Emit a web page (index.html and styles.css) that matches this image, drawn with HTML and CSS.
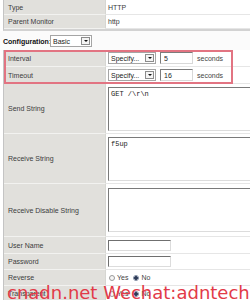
FILE: index.html
```html
<!DOCTYPE html>
<html>
<head>
<meta charset="utf-8">
<title>Monitor</title>
<link rel="stylesheet" href="styles.css">
</head>
<body>
<div class="page">
  <div class="tbl top">
    <div class="row h15"><div class="lbl">Type</div><div class="val">HTTP</div></div>
    <div class="row h14"><div class="lbl">Parent Monitor</div><div class="val">http</div></div>
  </div>

  <div class="config">
    <span class="cfg-label">Configuration:</span>
    <span class="sel sel-basic"><span class="sel-text">Basic</span><span class="sel-btn"></span></span>
  </div>

  <div class="tbl main">
    <div class="row h17">
      <div class="lbl">Interval</div>
      <div class="val">
        <span class="sel sel-spec"><span class="sel-text">Specify...</span><span class="sel-btn"></span></span>
        <input class="num" type="text" value="5">
        <span class="unit">seconds</span>
      </div>
    </div>
    <div class="row h17">
      <div class="lbl">Timeout</div>
      <div class="val">
        <span class="sel sel-spec"><span class="sel-text">Specify...</span><span class="sel-btn"></span></span>
        <input class="num" type="text" value="16">
        <span class="unit">seconds</span>
      </div>
    </div>
    <div class="row h50">
      <div class="lbl">Send String</div>
      <div class="val"><textarea class="area">GET /\r\n</textarea></div>
    </div>
    <div class="row h50">
      <div class="lbl">Receive String</div>
      <div class="val"><textarea class="area">f5up</textarea></div>
    </div>
    <div class="row h53">
      <div class="lbl">Receive Disable String</div>
      <div class="val"><textarea class="area"></textarea></div>
    </div>
    <div class="row h17">
      <div class="lbl">User Name</div>
      <div class="val"><input class="txt" type="text" value=""></div>
    </div>
    <div class="row h16">
      <div class="lbl">Password</div>
      <div class="val"><input class="txt" type="password" value=""></div>
    </div>
    <div class="row h16">
      <div class="lbl">Reverse</div>
      <div class="val radios">
        <span class="radio"></span><span class="rlabel">Yes</span>
        <span class="radio checked"></span><span class="rlabel">No</span>
      </div>
    </div>
    <div class="row h16">
      <div class="lbl">Transparent</div>
      <div class="val radios">
        <span class="radio"></span><span class="rlabel">Yes</span>
        <span class="radio checked"></span><span class="rlabel">No</span>
      </div>
    </div>
  </div>

  <div class="highlight"></div>
  <div class="watermark">cnadn.net Wechat:adntech</div>
</div>
</body>
</html>
```

FILE: styles.css
```css
html, body {
  margin: 0;
  padding: 0;
  background: #ffffff;
  overflow: hidden;
}

body {
  font-family: "Liberation Sans", Arial, sans-serif;
  font-size: 7px;
  line-height: 1;
  color: #3c3c3c;
}

.page {
  position: relative;
  width: 270px;
}

.tbl {
  margin-left: 3px;
  border-left: 1px solid #c4c4c4;
}

.top {
  border-bottom: 2px solid #d2d2d2;
}

.row {
  display: grid;
  grid-template-columns: 102px 1fr;
}

.h14 { height: 14px; }
.h15 { height: 15px; }
.h16 { height: 16px; }
.h17 { height: 17px; }
.h50 { height: 50px; }
.h53 { height: 53px; }

.lbl {
  display: flex;
  align-items: center;
  padding-left: 4px;
  background: #e1e0dc;
  border-bottom: 1px solid #f2f2f0;
  border-right: 1px solid #d6d6d2;
}

.val {
  display: flex;
  align-items: center;
  padding-left: 2px;
  border-bottom: 1px solid #e6e6e6;
  white-space: nowrap;
}

.config {
  display: flex;
  align-items: center;
  height: 19px;
  padding-left: 3px;
  padding-top: 1px;
  box-sizing: border-box;
  background: #fbfbfb;
}

.cfg-label {
  width: 47px;
  font-weight: bold;
  color: #111;
}

.sel {
  display: inline-flex;
  align-items: center;
  height: 12px;
  box-sizing: border-box;
  border: 1px solid #a5a5a5;
  background: #fff;
  padding: 0 1px 0 2px;
  justify-content: space-between;
  color: #222;
}

.sel-basic { width: 42px; }
.sel-spec { width: 48px; margin-left: 0; }

.sel-btn {
  position: relative;
  width: 9px;
  height: 8px;
  box-sizing: border-box;
  border: 1px solid #8c8c8c;
  background: #f4f4f4;
}

.sel-btn::after {
  content: "";
  position: absolute;
  left: 1.5px;
  top: 2px;
  border-left: 2px solid transparent;
  border-right: 2px solid transparent;
  border-top: 2px solid #111;
}

.num {
  width: 33px;
  height: 12px;
  box-sizing: border-box;
  margin: 0 0 0 4px;
  padding: 0 3px;
  font: 7px "Liberation Sans", Arial, sans-serif;
  color: #222;
  border: 1px solid #d8d8d8;
  border-top-color: #7c7c7c;
  border-left-color: #7c7c7c;
  background: #fff;
  outline: none;
}

.unit {
  margin-left: 4px;
  color: #444;
}

.area {
  width: 160px;
  height: 44px;
  box-sizing: border-box;
  margin: 0;
  padding: 2px 2px;
  resize: none;
  font: 7px/1.2 "Liberation Mono", "Courier New", monospace;
  color: #222;
  border: 1px solid #dcdcdc;
  border-top-color: #7a7a7a;
  border-left-color: #7a7a7a;
  background: #fff;
  outline: none;
  overflow: hidden;
}

.txt {
  width: 63px;
  height: 11px;
  box-sizing: border-box;
  margin: 0;
  padding: 0 2px;
  font: 7px "Liberation Sans", Arial, sans-serif;
  border: 1px solid #dcdcdc;
  border-top-color: #6f6f6f;
  border-left-color: #6f6f6f;
  background: #fff;
  outline: none;
}

.radios {
  padding-left: 3px;
}

.radio {
  width: 6px;
  height: 6px;
  box-sizing: border-box;
  border-radius: 50%;
  border: 1px solid #9a9a9a;
  background: #f6f6f6;
}

.radio.checked {
  background: radial-gradient(circle, #2d3b57 0 1.6px, #e8ecf3 1.9px);
  border-color: #7d8aa0;
}

.rlabel {
  margin: 0 5px 0 2px;
  color: #444;
}

.highlight {
  position: absolute;
  left: 4px;
  top: 50px;
  width: 229px;
  height: 34px;
  box-sizing: border-box;
  border: 2px solid #e27482;
  pointer-events: none;
}

.watermark {
  position: absolute;
  left: 7px;
  top: 284px;
  font-family: "DejaVu Sans", sans-serif;
  font-size: 18px;
  line-height: 18px;
  color: #e23a48;
  white-space: nowrap;
}
```
